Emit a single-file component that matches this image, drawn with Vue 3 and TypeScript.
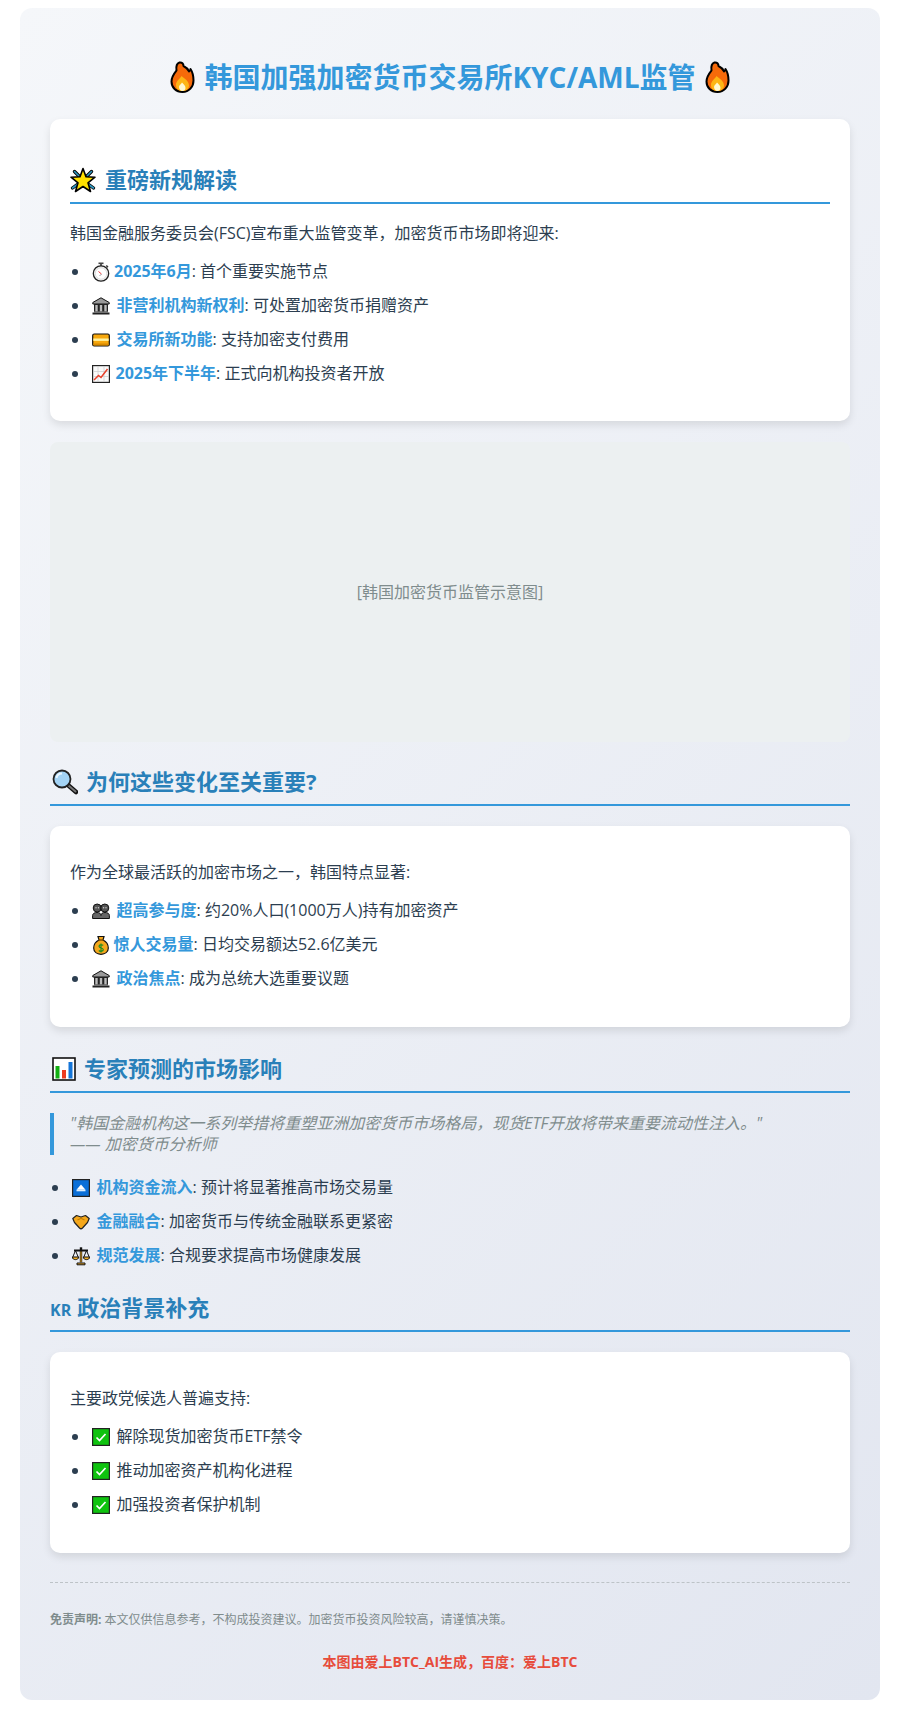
<script setup lang="ts">
interface Item { icon: string; w: number; strong?: string; text: string }

const list1: Item[] = [
  { icon: 'watch', w: 24, strong: '2025年6月', text: ': 首个重要实施节点' },
  { icon: 'bank', w: 26.5, strong: '非营利机构新权利', text: ': 可处置加密货币捐赠资产' },
  { icon: 'card', w: 26.5, strong: '交易所新功能', text: ': 支持加密支付费用' },
  { icon: 'trend', w: 25.5, strong: '2025年下半年', text: ': 正式向机构投资者开放' }
]
const list2: Item[] = [
  { icon: 'people', w: 26.5, strong: '超高参与度', text: ': 约20%人口(1000万人)持有加密资产' },
  { icon: 'bag', w: 23.5, strong: '惊人交易量', text: ': 日均交易额达52.6亿美元' },
  { icon: 'bank', w: 26.5, strong: '政治焦点', text: ': 成为总统大选重要议题' }
]
const list3: Item[] = [
  { icon: 'up', w: 26.5, strong: '机构资金流入', text: ': 预计将显著推高市场交易量' },
  { icon: 'hands', w: 26.5, strong: '金融融合', text: ': 加密货币与传统金融联系更紧密' },
  { icon: 'scale', w: 26.5, strong: '规范发展', text: ': 合规要求提高市场健康发展' }
]
const list4: Item[] = [
  { icon: 'check', w: 26.5, text: '解除现货加密货币ETF禁令' },
  { icon: 'check', w: 26.5, text: '推动加密资产机构化进程' },
  { icon: 'check', w: 26.5, text: '加强投资者保护机制' }
]
</script>

<template>
  <svg class="defs" aria-hidden="true">
    <symbol id="fire" viewBox="0 0 24 32">
      <path d="M9 1.500C11.500 1 13 3 13 5C15 6 17.500 8 18.500 10.500C19.500 9.800 20 9 20 8C22 11 23 15 23 19.500C23 26 18.500 31 12 31C5.500 31 1 26.500 1 20.500C1 15.500 4 12 6 9.500C5.500 6 6 2.500 9 1.500Z" fill="#f66a0a" stroke="#000" stroke-width="2" stroke-linejoin="round"/>
      <path d="M5.500 24C5.500 20 9 18.500 11 15C14 17.500 18.500 20 18.500 24.500C18.500 28 15.500 30 12 30C8.500 30 5.500 28 5.500 24Z" fill="#fdb515"/>
      <path d="M8.500 26C8.500 24 10.500 23.500 11.500 21.500C13 23 15 24.500 15 27C15 29 13.500 30 12 30C10 30 8.500 28 8.500 26Z" fill="#fff8d0"/>
    </symbol>
    <symbol id="boom" viewBox="0 0 26 26">
      <path d="M4.500 4.500L9 9M21.500 4.500L17 9M2.500 21L8 17M23.500 21L18 17" stroke="#000" stroke-width="3.400" stroke-linecap="round"/>
      <path d="M4.500 4.500L9 9M21.500 4.500L17 9M2.500 21L8 17M23.500 21L18 17" stroke="#2f9ac4" stroke-width="1.600" stroke-linecap="round"/>
      <path d="M13 1.500L16 9.800L25 10.200L18 15.800L20.500 24.500L13 19.500L5.500 24.500L8 15.800L1 10.200L10 9.800Z" fill="#ffe000" stroke="#000" stroke-width="1.600" stroke-linejoin="round"/>
    </symbol>
    <symbol id="watch" viewBox="0 0 18 20">
      <rect x="6.500" y=".5" width="5" height="1.600" fill="#444"/>
      <rect x="8.200" y="2" width="1.600" height="2" fill="#333"/>
      <path d="M14.300 3.500L16 5.200" stroke="#333" stroke-width="1.500"/>
      <circle cx="9" cy="11.500" r="7.700" fill="#f2f2f2" stroke="#222" stroke-width="1.300"/>
      <circle cx="9" cy="11.500" r="5.700" fill="#fff" stroke="#ccc" stroke-width=".6"/>
      <path d="M9.500 12L6.500 9.500" stroke="#e33" stroke-width="1"/>
      <path d="M9.500 12L7.500 14" stroke="#888" stroke-width=".8"/>
    </symbol>
    <symbol id="bank" viewBox="0 0 18 18">
      <path d="M9 .8L.8 5.500V7H17.200V5.500Z" fill="#9a9a9a" stroke="#111" stroke-width="1"/>
      <rect x="2" y="7" width="14" height="8" fill="#222"/>
      <path d="M3.300 8h2.400v6.500H3.300zM7.800 8h2.400v6.500H7.800zM12.300 8h2.400v6.500h-2.400z" fill="#bcbcbc"/>
      <rect x="2" y="14.500" width="14" height="1" fill="#888"/>
      <rect x=".5" y="15.500" width="17" height="2" fill="#222"/>
    </symbol>
    <symbol id="card" viewBox="0 0 18 14">
      <rect x=".7" y="1" width="16.600" height="12" rx="1.500" fill="#f7a80d" stroke="#111" stroke-width="1.200"/>
      <rect x="1.300" y="5.500" width="15.400" height="2.400" fill="#fff2a0"/>
      <rect x="1.300" y="10.500" width="15.400" height="1.800" fill="#d98a00"/>
    </symbol>
    <symbol id="trend" viewBox="0 0 18 18">
      <rect x=".6" y=".6" width="16.800" height="16.800" fill="#fafafa" stroke="#222" stroke-width="1.200"/>
      <path d="M1 6.500H17M1 11.500H17M6 1V17M12 1V17" stroke="#ccc" stroke-width=".7"/>
      <path d="M2 15L6.500 10.500L9 12.500L15.500 4" fill="none" stroke="#e8402a" stroke-width="1.500"/>
    </symbol>
    <symbol id="people" viewBox="0 0 18 16">
      <circle cx="5.200" cy="5" r="4" fill="#555" stroke="#111"/>
      <circle cx="12.800" cy="5" r="4" fill="#555" stroke="#111"/>
      <path d="M.6 15.500V12.500C.6 10.500 2.500 9.500 5 9.500C7.500 9.500 9 10.500 9 12.500C9 10.500 10.500 9.500 13 9.500C15.500 9.500 17.400 10.500 17.400 12.500V15.500Z" fill="#666" stroke="#111"/>
      <circle cx="4" cy="4.800" r=".7" fill="#ccc"/><circle cx="6.400" cy="4.800" r=".7" fill="#ccc"/>
      <circle cx="11.600" cy="4.800" r=".7" fill="#ccc"/><circle cx="14" cy="4.800" r=".7" fill="#ccc"/>
    </symbol>
    <symbol id="bag" viewBox="0 0 16 20">
      <path d="M5 1.500H11L10 5C14 7 15.300 10.500 15.300 13C15.300 17 12 19.300 8 19.300C4 19.300 .7 17 .7 13C.7 10.500 2 7 6 5Z" fill="#f5a81c" stroke="#111" stroke-width="1.200"/>
      <rect x="5.500" y="4.300" width="5" height="1.400" fill="#7a4a00"/>
      <path d="M10.200 10.300C9.500 9.500 6 9.300 6 11.200C6 13.300 10.300 12.500 10.300 14.700C10.300 16.500 6.800 16.500 5.800 15.500M8 8.500V17.500" fill="none" stroke="#0f8a1f" stroke-width="1.100"/>
    </symbol>
    <symbol id="up" viewBox="0 0 18 18">
      <rect x=".6" y=".6" width="16.800" height="16.800" fill="#0a6fd8" stroke="#222" stroke-width="1.200"/>
      <path d="M9 5.500L13.500 10.800H4.500Z" fill="#fff"/>
      <rect x="4.500" y="10.800" width="9" height="1.500" fill="#dbeeff"/>
    </symbol>
    <symbol id="hands" viewBox="0 0 18 15">
      <path d="M.8 4L4.500 1L9 2.500L13.500 1L17.200 4L15.500 8L10.500 13.500C9.500 14.500 8.500 14.500 7.500 13.500L2.500 8Z" fill="#f5a81c" stroke="#222" stroke-width="1.200" stroke-linejoin="round"/>
      <path d="M5.500 5.500L9 3.800L12.500 5.500" fill="none" stroke="#c77f00" stroke-width="1.200"/>
    </symbol>
    <symbol id="scale" viewBox="0 0 18 19">
      <path d="M2 4H16" stroke="#111" stroke-width="2"/>
      <rect x="7.800" y=".8" width="2.400" height="15" fill="#111"/>
      <rect x="8.500" y="5" width="1" height="11" fill="#f5b028"/>
      <path d="M3.500 4L.8 10.500M3.500 4L6.200 10.500M14.500 4L11.800 10.500M14.500 4L17.200 10.500" stroke="#111" stroke-width="1"/>
      <path d="M.3 10.500H6.700C6.700 14 .3 14 .3 10.500ZM11.300 10.500H17.700C17.700 14 11.300 14 11.300 10.500Z" fill="#f5b028" stroke="#111" stroke-width="1"/>
      <path d="M5 18.300V16.500H13V18.300Z" fill="#f5b028" stroke="#111" stroke-width="1"/>
    </symbol>
    <symbol id="check" viewBox="0 0 18 18">
      <rect x=".6" y=".6" width="16.800" height="16.800" fill="#0fc30f" stroke="#222" stroke-width="1.200"/>
      <path d="M4.500 9.500L7.500 12.500L13.500 6" fill="none" stroke="#fff" stroke-width="1.700"/>
    </symbol>
    <symbol id="glass" viewBox="0 0 26 26">
      <path d="M16.500 16.500L24 23" stroke="#111" stroke-width="4.500" stroke-linecap="round"/>
      <path d="M17 17L23.500 22.500" stroke="#777" stroke-width="2" stroke-linecap="round"/>
      <circle cx="10" cy="10" r="8.500" fill="#a3d3f5" stroke="#222" stroke-width="1.800"/>
      <path d="M4.500 9C5 6 7 4.500 10 4.500" fill="none" stroke="#eaf6ff" stroke-width="2"/>
    </symbol>
    <symbol id="chart" viewBox="0 0 24 24">
      <rect x="1" y="1" width="22" height="22" fill="#fff" stroke="#111" stroke-width="1.600"/>
      <rect x="3.500" y="9" width="4" height="12.500" fill="#12b012"/>
      <rect x="10" y="13" width="4" height="8.500" fill="#ee3b1f"/>
      <rect x="16.500" y="5" width="4" height="16.500" fill="#1475d8"/>
    </symbol>
  </svg>

  <div class="container">
    <h1 class="title">
      <svg class="emoji fire"><use href="#fire" /></svg>
      <span>韩国加强加密货币交易所KYC/AML监管</span>
      <svg class="emoji fire"><use href="#fire" /></svg>
    </h1>

    <section class="card first">
      <h2><svg class="emoji h-icon boom"><use href="#boom" /></svg><span>重磅新规解读</span></h2>
      <p>韩国金融服务委员会(FSC)宣布重大监管变革&#xFF0C;加密货币市场即将迎来:</p>
      <ul>
        <li v-for="it in list1" :key="it.strong">
          <span class="icon-box" :style="{ width: it.w + 'px' }"><svg class="emoji"><use :href="'#' + it.icon" /></svg></span><strong>{{ it.strong }}</strong>{{ it.text }}
        </li>
      </ul>
    </section>

    <div class="placeholder">[韩国加密货币监管示意图]</div>

    <h2 class="outer"><svg class="emoji h-icon glass"><use href="#glass" /></svg><span>为何这些变化至关重要?</span></h2>
    <section class="card plain">
      <p>作为全球最活跃的加密市场之一&#xFF0C;韩国特点显著:</p>
      <ul>
        <li v-for="it in list2" :key="it.strong">
          <span class="icon-box" :style="{ width: it.w + 'px' }"><svg class="emoji"><use :href="'#' + it.icon" /></svg></span><strong>{{ it.strong }}</strong>{{ it.text }}
        </li>
      </ul>
    </section>

    <h2 class="outer second"><svg class="emoji h-icon chart"><use href="#chart" /></svg><span>专家预测的市场影响</span></h2>
    <blockquote>"韩国金融机构这一系列举措将重塑亚洲加密货币市场格局&#xFF0C;现货ETF开放将带来重要流动性注入。"<br />—— 加密货币分析师</blockquote>
    <ul class="bare">
      <li v-for="it in list3" :key="it.strong">
        <span class="icon-box" :style="{ width: it.w + 'px' }"><svg class="emoji"><use :href="'#' + it.icon" /></svg></span><strong>{{ it.strong }}</strong>{{ it.text }}
      </li>
    </ul>

    <h2 class="outer second"><span class="kr">KR</span><span>政治背景补充</span></h2>
    <section class="card plain">
      <p>主要政党候选人普遍支持:</p>
      <ul>
        <li v-for="it in list4" :key="it.text">
          <span class="icon-box" :style="{ width: it.w + 'px' }"><svg class="emoji"><use :href="'#' + it.icon" /></svg></span>{{ it.text }}
        </li>
      </ul>
    </section>

    <footer>
      <p class="disclaimer"><b>免责声明:</b> 本文仅供信息参考&#xFF0C;不构成投资建议。加密货币投资风险较高&#xFF0C;请谨慎决策。</p>
      <p class="credit">本图由爱上BTC_AI生成&#xFF0C;百度&#xFF1A;爱上BTC</p>
    </footer>
  </div>
</template>

<style>
html, body { margin: 0; background: #fff; }
</style>

<style scoped>
.defs { position: absolute; width: 0; height: 0; overflow: hidden; }
.container {
  box-sizing: border-box;
  width: 860px;
  height: 1692px;
  margin: 8px auto 32px;
  padding: 47px 30px 0;
  border-radius: 12px;
  background: linear-gradient(135deg, #f5f7fa 0%, #e2e6f0 100%);
  font-family: "Open Sans", "Noto Sans CJK SC", sans-serif;
  font-size: 16px;
  line-height: 21px;
  color: #2c3e50;
}
.title {
  display: flex;
  justify-content: center;
  align-items: center;
  gap: 9px;
  margin: 0 0 20px;
  font-size: 28px;
  line-height: 44px;
  font-weight: 700;
  color: #3498db;
}
.emoji { display: block; width: 18px; height: 20px; }
.fire { width: 25px; height: 32px; }
h2 {
  display: flex;
  align-items: center;
  margin: 0;
  padding-bottom: 7px;
  border-bottom: 2px solid #3498db;
  font-size: 22px;
  line-height: 31px;
  font-weight: 700;
  color: #2980b9;
}
.h-icon { margin-right: 9px; }
.boom { width: 26px; height: 26px; }
.glass { width: 26px; height: 26px; margin: 0 8px 0 2px; }
.chart { width: 24px; height: 24px; margin: 0 8px 0 2px; }
.kr { font-size: 16px; margin-right: 6px; position: relative; top: 3px; }
.outer { margin-top: 24px; }
.outer.second { margin-top: 26px; }
.card {
  margin: 0;
  padding: 30px 20px 24px;
  border-radius: 10px;
  background: #fff;
  box-shadow: 0 4px 8px rgba(0, 0, 0, .1);
}
.card.first { padding-top: 45px; }
.card.plain { margin-top: 20px; padding: 36px 20px 25px; }
p { margin: 0; }
.card > h2 + p { margin-top: 19px; }
ul { margin: 0; padding: 0; list-style: none; }
.card ul { margin-top: 17px; padding-left: 20px; }
.bare { margin-top: 22px; padding-left: 20px; }
li { position: relative; display: flex; align-items: center; height: 21px; margin-bottom: 13px; white-space: pre-wrap; }
li::before {
  content: "";
  position: absolute;
  left: -18px;
  top: 8px;
  width: 6px;
  height: 6px;
  border-radius: 50%;
  background: #2c3e50;
}
.icon-box { display: flex; flex: none; align-items: center; padding-left: 2px; box-sizing: border-box; }
strong { font-weight: 700; color: #3498db; }
.placeholder {
  display: flex;
  align-items: center;
  justify-content: center;
  height: 300px;
  margin: 21px 0 0;
  border-radius: 8px;
  background: #ecf0f1;
  color: #7f8c8d;
}
blockquote {
  margin: 20px 0 0;
  padding-left: 16px;
  border-left: 4px solid #3498db;
  font-style: italic;
  color: #7f8c8d;
}
footer { margin-top: 29px; padding-top: 29px; border-top: 1px dashed #bdc3c7; }
.disclaimer { font-size: 12px; line-height: 16px; color: #7f8c8d; }
.credit { margin-top: 25px; text-align: center; font-size: 14px; line-height: 18px; font-weight: 700; color: #e74c3c; }
</style>
